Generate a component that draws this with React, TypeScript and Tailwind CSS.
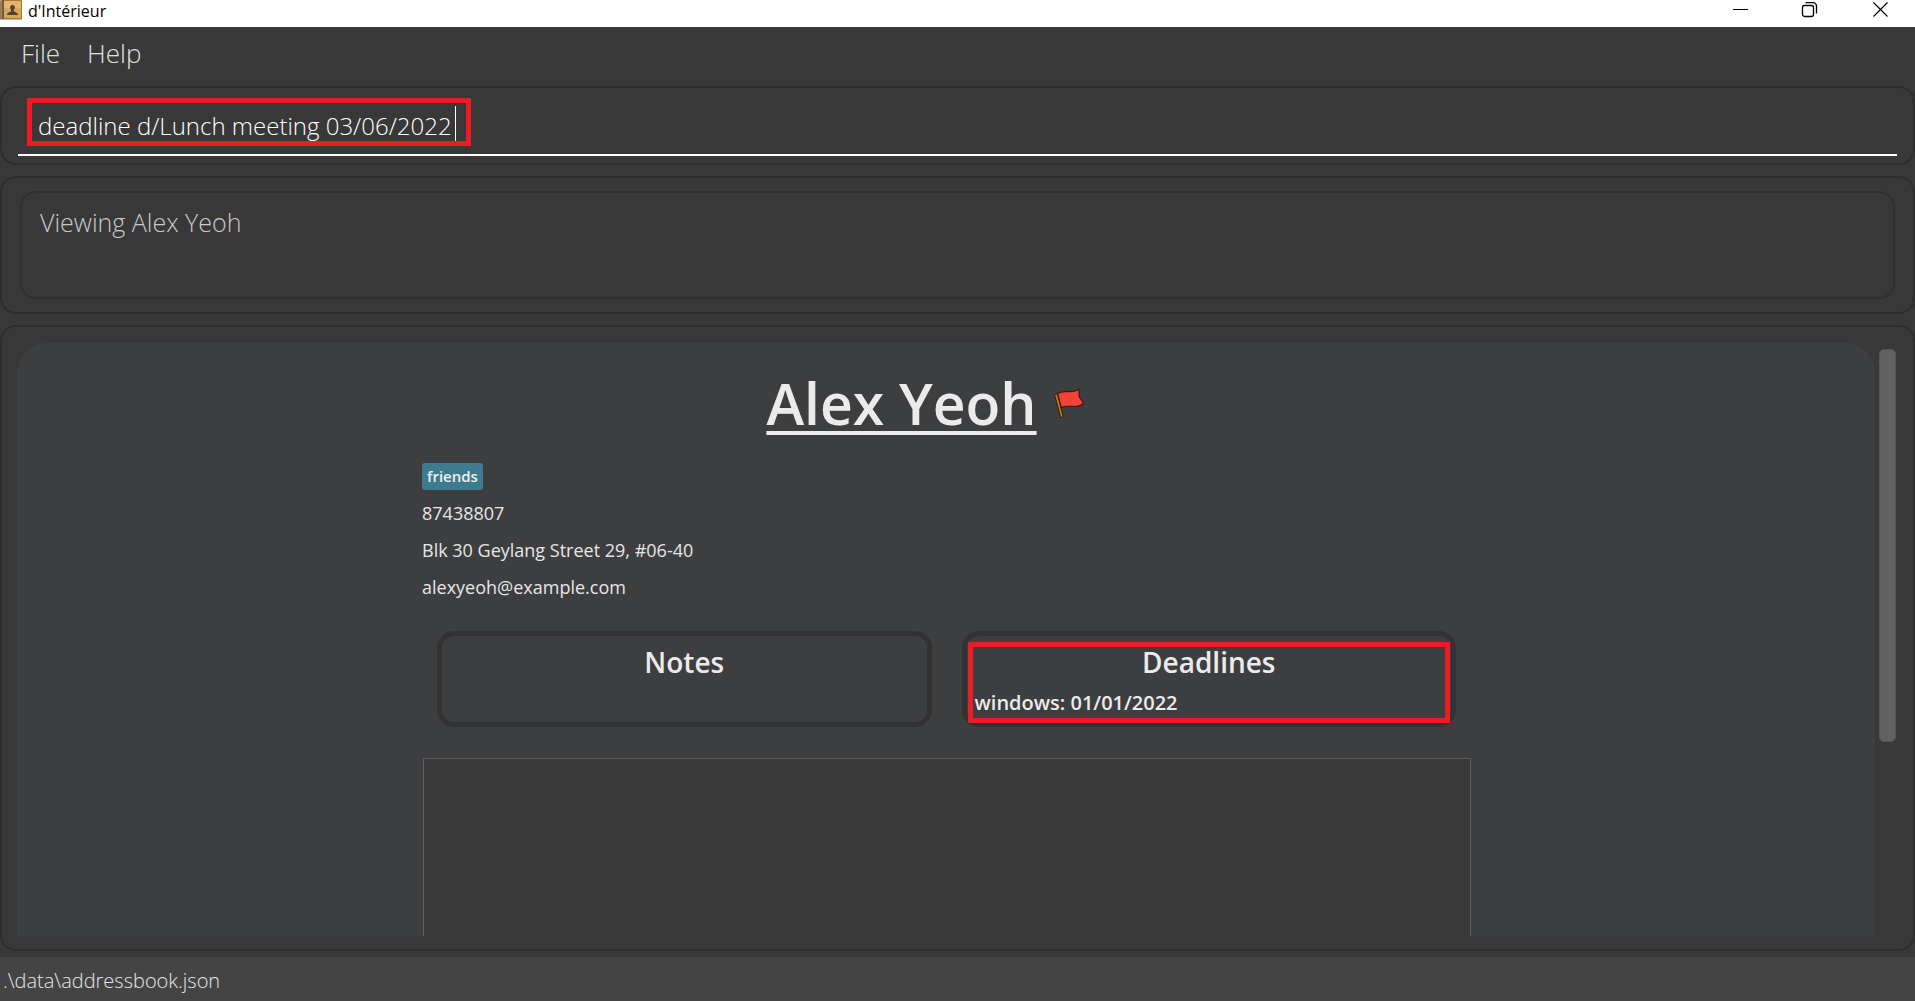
import React from "react";

function BookIcon() {
  return (
    <svg width="22" height="20" viewBox="0 0 22 20" aria-hidden="true">
      <rect x="0" y="0" width="22" height="20" rx="1" fill="#a9782f" />
      <rect x="4" y="1" width="17" height="17" fill="#d9a557" />
      <rect x="4" y="1" width="17" height="7" fill="#e3b670" />
      <rect x="1" y="0" width="3" height="19" fill="#6f5a49" />
      <rect x="1" y="0" width="1" height="19" fill="#9a8672" />
      <rect x="0" y="19" width="22" height="1" fill="#c9bba6" />
      <path d="M12.500 5c1.600 0 2.400 1.100 2.400 2.500 0 1-.5 1.800-1 2.300v1.500c.4.900 4.100.9 4.100 3.700H7c0-2.800 3.700-2.800 4.100-3.700V9.800c-.5-.5-1-1.300-1-2.300C10.100 6.100 10.900 5 12.500 5z" fill="#54422f" />
    </svg>
  );
}

function FlagIcon() {
  return (
    <svg width="32" height="32" viewBox="0 0 32 32" aria-label="Flagged" role="img">
      <path d="M1.500 6.500l2.800-.8 6 23-2.600.9z" fill="#c27a0c" stroke="#2c1c12" strokeWidth="1" strokeLinejoin="round" />
      <path d="M4.500 5.500C9 2.500 13 4 17 3.600c4-.2 7-1 9-2.600l.3 7.800 4.200 6.200c-3 3.500-7 3.800-11 3.400-4-.3-8-.6-11.200 1.200z" fill="#f44336" stroke="#3a1714" strokeWidth="1.200" strokeLinejoin="round" />
    </svg>
  );
}

function TitleBar() {
  return (
    <header className="flex h-[27px] shrink-0 items-start justify-between bg-white">
      <div className="flex items-start gap-[6px]">
        <BookIcon />
        <span className="text-[16px] leading-[22px] text-black">d'Intérieur</span>
      </div>
      <div className="flex gap-[52px] pr-[26px] pt-[1px]">
        <button aria-label="Minimize">
          <svg width="17" height="17" viewBox="0 0 17 17" stroke="#000" fill="none">
            <path d="M1 8.500h15" />
          </svg>
        </button>
        <button aria-label="Restore">
          <svg width="17" height="17" viewBox="0 0 17 17" stroke="#000" strokeWidth="1.300" fill="none">
            <rect x="1.500" y="4.500" width="11" height="11" rx="2" />
            <path d="M4.500 1.600h7.500a3.500 3.500 0 0 1 3.500 3.500v7.400" />
          </svg>
        </button>
        <button aria-label="Close" className="ml-[2px]">
          <svg width="17" height="17" viewBox="0 0 17 17" stroke="#000" strokeWidth="1.200" fill="none">
            <path d="M1.500 1.500l14 14M15.500 1.500l-14 14" />
          </svg>
        </button>
      </div>
    </header>
  );
}

function MenuBar() {
  return (
    <nav className="flex h-[59px] shrink-0 items-start gap-[27px] pl-[21px] pt-[8px] text-[26px] leading-[36px] font-light text-[#e0e0e0]">
      <button>File</button>
      <button>Help</button>
    </nav>
  );
}

function CommandBox() {
  return (
    <section className="relative h-[79px] shrink-0 rounded-[16px] border-2 border-[#2d2d2d] px-[16px] pt-[10px]">
      <input
        aria-label="Command"
        defaultValue="deadline d/Lunch meeting 03/06/2022"
        className="h-[58px] w-full border-b-2 border-white bg-transparent pb-[2px] pl-[20px] text-[24px] font-light text-white outline-none"
      />
      <div className="pointer-events-none absolute left-[25px] top-[10px] h-[48px] w-[444px] border-[5px] border-[#ed1c24]">
        <div className="absolute right-[10px] top-[3px] h-[35px] w-px bg-white" />
      </div>
    </section>
  );
}

function ResultBox() {
  return (
    <section className="h-[138px] shrink-0 rounded-[16px] border-2 border-[#2d2d2d] px-[18px] py-[13px]">
      <output className="block h-full rounded-[16px] border-2 border-[#303030] px-[18px] pt-[12px] text-[25px] leading-[34px] font-light text-[#c8c8c8]">
        Viewing Alex Yeoh
      </output>
    </section>
  );
}

function InfoCard({ title, children }: { title: string; children?: React.ReactNode }) {
  return (
    <section className="relative h-[96px] flex-1 rounded-[17px] border-[5px] border-[#323232] px-[8px] pt-[7px] text-[#ebebeb]">
      <h2 className="text-center text-[28px] leading-[38px] font-semibold">{title}</h2>
      {children}
    </section>
  );
}

function PersonDetails() {
  return (
    <article className="min-h-0 flex-1 overflow-hidden rounded-t-[30px] bg-[#3d3e40]">
      <div className="mx-auto flex h-full w-full max-w-[1050px] flex-col pl-px">
        <div className="flex justify-center gap-[16px] pt-[24px] pr-[42px]">
          <h1 className="text-[57px] leading-[72px] font-semibold text-[#ebebeb] underline decoration-4 underline-offset-[6px]">Alex Yeoh</h1>
          <span className="pt-[21px]">
            <FlagIcon />
          </span>
        </div>
        <div className="flex flex-col items-start gap-[10px] pt-[24px] text-[18px] leading-[27px] text-[#e6e6e6]">
          <span className="rounded-[3px] bg-[#3e7b91] px-[5px] text-[15px] font-semibold text-[#f0f0e8]">friends</span>
          <span>87438807</span>
          <span>Blk 30 Geylang Street 29, #06-40</span>
          <span>alexyeoh@example.com</span>
        </div>
        <div className="flex gap-[30px] px-[15px] pt-[30px]">
          <InfoCard title="Notes" />
          <InfoCard title="Deadlines">
            <p className="pt-[8px] text-[20px] leading-[28px] font-semibold">windows: 01/01/2022</p>
            <div className="pointer-events-none absolute inset-x-px top-[6px] -bottom-px border-[5px] border-[#ed1c24]" />
          </InfoCard>
        </div>
        <div className="mt-[31px] ml-px min-h-0 flex-1 border border-b-0 border-[#5c5c5c] bg-[#383838]" />
      </div>
    </article>
  );
}

export default function App() {
  return (
    <div className="flex h-screen flex-col bg-[#383838] font-['Open_Sans','Noto_Sans',sans-serif]">
      <TitleBar />
      <MenuBar />
      <main className="flex min-h-0 flex-1 flex-col gap-[11px]">
        <CommandBox />
        <ResultBox />
        <section className="flex min-h-0 flex-1 gap-[4px] rounded-[16px] border-2 border-[#2d2d2d] pt-[16px] pr-[17px] pb-[13px] pl-[15px]">
          <PersonDetails />
          <div className="w-[17px] pt-[6px]">
            <div className="h-[67%] rounded-[5px] border border-[#565656] bg-[#616161]" />
          </div>
        </section>
      </main>
      <footer className="mt-[6px] h-[44px] shrink-0 bg-[#444444] pl-[3px] text-[20px] leading-[48px] font-light text-[#e6e6e6]">
        .\data\addressbook.json
      </footer>
    </div>
  );
}
